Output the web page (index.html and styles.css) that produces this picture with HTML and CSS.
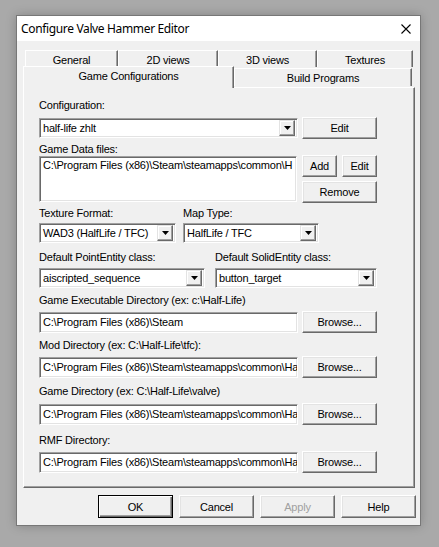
FILE: index.html
```html
<!DOCTYPE html>
<html lang="en">
<head>
  <meta charset="UTF-8">
  <meta name="viewport" content="width=device-width, initial-scale=1.0">
  <title>Configure Valve Hammer Editor</title>
  <link rel="stylesheet" href="styles.css">
</head>
<body>
  <div class="window">
    <div class="titlebar">
      <span class="title">Configure Valve Hammer Editor</span>
      <svg class="close" width="10" height="10" viewBox="0 0 10 10">
        <path d="M0.5 0.5 L9.5 9.5 M9.5 0.5 L0.5 9.5" stroke="#000" stroke-width="1.1" fill="none"/>
      </svg>
    </div>

    <div class="dialog">
      <div class="tabs">
        <div class="tab-row back">
          <div class="tab tab-general">General</div>
          <div class="tab tab-2d">2D views</div>
          <div class="tab tab-3d">3D views</div>
          <div class="tab tab-tex">Textures</div>
        </div>
        <div class="tab-row front">
          <div class="tab tab-games selected">Game Configurations</div>
          <div class="tab tab-build">Build Programs</div>
        </div>
      </div>

      <div class="panel">
        <div class="label">Configuration:</div>
        <div class="row mt5">
          <div class="combo sunken w-wide">
            <span class="combo-text">half-life zhlt</span>
            <span class="combo-btn"><svg width="7" height="4" viewBox="0 0 7 4"><polygon points="0,0 7,0 3.5,4" fill="#000"/></svg></span>
          </div>
          <button class="btn btn-wide">Edit</button>
        </div>

        <div class="label mt4">Game Data files:</div>
        <div class="row row-list">
          <div class="listbox sunken">
            <div class="list-item">C:\Program Files (x86)\Steam\steamapps\common\H</div>
          </div>
          <div class="list-buttons">
            <div class="btn-pair">
              <button class="btn btn-small">Add</button>
              <button class="btn btn-small">Edit</button>
            </div>
            <button class="btn btn-wide">Remove</button>
          </div>
        </div>

        <div class="pair mt4">
          <div class="col col-tex">
            <div class="label">Texture Format:</div>
            <div class="combo sunken mt3">
              <span class="combo-text">WAD3 (HalfLife / TFC)</span>
              <span class="combo-btn"><svg width="7" height="4" viewBox="0 0 7 4"><polygon points="0,0 7,0 3.5,4" fill="#000"/></svg></span>
            </div>
          </div>
          <div class="col col-map">
            <div class="label">Map Type:</div>
            <div class="combo sunken mt3">
              <span class="combo-text">HalfLife / TFC</span>
              <span class="combo-btn"><svg width="7" height="4" viewBox="0 0 7 4"><polygon points="0,0 7,0 3.5,4" fill="#000"/></svg></span>
            </div>
          </div>
        </div>

        <div class="pair pair-entity mt8">
          <div class="col col-point">
            <div class="label">Default PointEntity class:</div>
            <div class="combo sunken mt4">
              <span class="combo-text">aiscripted_sequence</span>
              <span class="combo-btn"><svg width="7" height="4" viewBox="0 0 7 4"><polygon points="0,0 7,0 3.5,4" fill="#000"/></svg></span>
            </div>
          </div>
          <div class="col col-solid">
            <div class="label">Default SolidEntity class:</div>
            <div class="combo sunken mt4">
              <span class="combo-text">button_target</span>
              <span class="combo-btn"><svg width="7" height="4" viewBox="0 0 7 4"><polygon points="0,0 7,0 3.5,4" fill="#000"/></svg></span>
            </div>
          </div>
        </div>

        <div class="label mt6">Game Executable Directory (ex: c:\Half-Life)</div>
        <div class="row mt4">
          <div class="edit sunken">C:\Program Files (x86)\Steam</div>
          <button class="btn btn-wide">Browse...</button>
        </div>

        <div class="label mt6">Mod Directory (ex: C:\Half-Life\tfc):</div>
        <div class="row mt4">
          <div class="edit sunken">C:\Program Files (x86)\Steam\steamapps\common\Ha</div>
          <button class="btn btn-wide">Browse...</button>
        </div>

        <div class="label mt7">Game Directory (ex: C:\Half-Life\valve)</div>
        <div class="row mt5">
          <div class="edit sunken">C:\Program Files (x86)\Steam\steamapps\common\Ha</div>
          <button class="btn btn-wide">Browse...</button>
        </div>

        <div class="label mt9">RMF Directory:</div>
        <div class="row mt4">
          <div class="edit sunken">C:\Program Files (x86)\Steam\steamapps\common\Ha</div>
          <button class="btn btn-wide">Browse...</button>
        </div>
      </div>

      <div class="dialog-buttons">
        <button class="btn btn-dialog default">OK</button>
        <button class="btn btn-dialog">Cancel</button>
        <button class="btn btn-dialog" disabled>Apply</button>
        <button class="btn btn-dialog">Help</button>
      </div>
    </div>
  </div>
</body>
</html>
```

FILE: styles.css
```css
* {
  box-sizing: border-box;
}

body {
  margin: 0;
  width: 439px;
  height: 547px;
  overflow: hidden;
  background: #a9a9a9;
  font-family: "Liberation Sans", Arial, sans-serif;
  font-size: 11px;
  letter-spacing: -0.2px;
  color: #000;
}

/* window frame */
.window {
  margin: 15px 0 0 16px;
  width: 405px;
  height: 511px;
  border: 1px solid #777;
  background: #f0f0f0;
  box-shadow: 0 0 10px rgba(0, 0, 0, 0.22);
  display: flex;
  flex-direction: column;
}

.titlebar {
  height: 25px;
  background: #fff;
  display: flex;
  align-items: center;
  justify-content: space-between;
  padding: 0 9px 0 4px;
}

.title {
  font-family: "Noto Sans", "Open Sans", sans-serif;
  font-size: 12px;
  letter-spacing: -0.35px;
}

.close {
  display: block;
  margin-top: 1px;
}

.dialog {
  flex: 1;
  padding: 9px 4px 0 6px;
}

/* tabs */
.tabs {
  width: 392px;
}

.tab-row {
  display: flex;
}

.tab-row.back {
  padding-left: 2px;
  height: 17px;
}

.tab-row.front {
  margin-top: -1px;
  height: 21px;
  position: relative;
}

.tab {
  height: 17px;
  background: #f0f0f0;
  border-top: 1px solid #fff;
  border-left: 1px solid #fff;
  border-right: 1px solid #696969;
  box-shadow: inset -1px 0 #a0a0a0;
  text-align: center;
  line-height: 13px;
  padding-top: 3px;
  white-space: nowrap;
}

.tab-general { width: 93px; }
.tab-2d { width: 100px; }
.tab-3d { width: 99px; }
.tab-tex { width: 96px; }

.tab-games {
  width: 211px;
}

.tab-build {
  width: 178px;
  height: 18px;
  margin-top: 2px;
}

.tab.selected {
  height: 22px;
  position: relative;
  z-index: 1;
  margin-bottom: -1px;
  padding-top: 3px;
}

/* property page */
.panel {
  width: 392px;
  height: 401px;
  background: #f0f0f0;
  border: 1px solid;
  border-color: #fff #696969 #696969 #fff;
  box-shadow: inset -1px -1px #a0a0a0;
  padding: 11px 0 0 15px;
}

.label {
  height: 13px;
  line-height: 13px;
  white-space: nowrap;
}

.mt3 { margin-top: 3px; }
.mt4 { margin-top: 4px; }
.mt5 { margin-top: 5px; }
.mt6 { margin-top: 6px; }
.mt7 { margin-top: 7px; }
.mt8 { margin-top: 8px; }
.mt9 { margin-top: 9px; }

.row {
  display: flex;
  align-items: center;
  gap: 4px;
  height: 22px;
}

.row-list {
  height: 48px;
  align-items: flex-start;
  gap: 5px;
  margin-top: -1px;
}

.pair {
  display: flex;
  gap: 7px;
}

.pair-entity {
  gap: 10px;
}

.col-tex { width: 137px; }
.col-map { width: 136px; }
.col-point { width: 166px; }
.col-solid { width: 162px; }

/* 3D edges */
.sunken {
  background: #fff;
  border: 1px solid;
  border-color: #a0a0a0 #fff #fff #a0a0a0;
  box-shadow: inset 1px 1px #696969, inset -1px -1px #e3e3e3;
}

.btn {
  height: 22px;
  padding: 0;
  background: #f0f0f0;
  font: inherit;
  letter-spacing: inherit;
  color: #000;
  border: 1px solid;
  border-color: #fff #696969 #696969 #fff;
  box-shadow: inset -1px -1px #a0a0a0, inset 1px 1px #e3e3e3;
  display: flex;
  align-items: center;
  justify-content: center;
}

.btn:disabled {
  color: #a0a0a0;
}

.btn-wide {
  width: 75px;
}

.btn-small {
  width: 35px;
}

.btn-dialog {
  width: 75px;
  height: 23px;
}

.btn.default {
  border: 1px solid #000;
  box-shadow: inset 1px 1px #fff, inset -1px -1px #696969, inset -2px -2px #a0a0a0;
}

/* combo boxes */
.combo {
  height: 20px;
  display: flex;
  align-items: center;
  padding: 2px;
}

.combo.w-wide {
  width: 259px;
}

.combo-text {
  flex: 1;
  padding-left: 1px;
  white-space: nowrap;
  overflow: hidden;
}

.combo-btn {
  width: 16px;
  height: 16px;
  background: #f0f0f0;
  border: 1px solid;
  border-color: #e3e3e3 #696969 #696969 #e3e3e3;
  box-shadow: inset -1px -1px #a0a0a0, inset 1px 1px #fff;
  display: flex;
  align-items: center;
  justify-content: center;
}

.combo-btn svg {
  display: block;
}

/* list and edits */
.listbox {
  width: 258px;
  height: 46px;
  margin-top: 1px;
  padding: 2px 3px;
  overflow: hidden;
}

.list-item {
  line-height: 13px;
  white-space: nowrap;
}

.list-buttons {
  display: flex;
  flex-direction: column;
  gap: 4px;
}

.btn-pair {
  display: flex;
  gap: 5px;
}

.edit {
  width: 259px;
  height: 21px;
  line-height: 19px;
  padding: 0 3px;
  white-space: nowrap;
  overflow: hidden;
}

.dialog-buttons {
  display: flex;
  justify-content: flex-end;
  gap: 6px;
  margin-top: 7px;
}
```
